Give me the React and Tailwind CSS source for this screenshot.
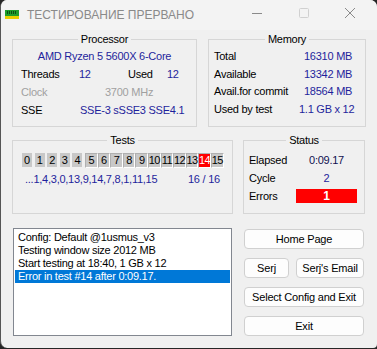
import React from 'react';

const blue = 'text-[#1f1f9c]';

function GroupBox({ title, className, children }) {
  return (
    <div className={`relative border border-[#d6d6d6] ${className}`}>
      <div className="absolute -top-[8px] left-0 right-0 flex justify-center">
        <span className="bg-[#f0f0f0] px-[3px] leading-[14px]">{title}</span>
      </div>
      {children}
    </div>
  );
}

const tests = ['0', '1', '2', '3', '4', '5', '6', '7', '8', '9', '10', '11', '12', '13', '14', '15'];

function TestCell({ n }) {
  const i = Number(n);
  if (i < 5) {
    return (
      <div className="w-[10px] h-[14px] mr-[2.6px] bg-[#c8c8c8] flex items-center justify-center leading-none">
        {n}
      </div>
    );
  }
  const red = i === 14;
  return (
    <div
      className={`w-[12.6px] h-[15px] flex items-center justify-center leading-none tracking-[-0.6px] border border-t-[#b0b0b0] border-l-[#b0b0b0] border-b-white border-r-white ${
        red ? 'bg-[#ff0000] text-white' : 'bg-[#c8c8c8]'
      }`}
    >
      {n}
    </div>
  );
}

function Btn({ children, className }) {
  return (
    <button className={`h-[20px] rounded-[4px] border border-[#d0d0d0] bg-[#fdfdfd] text-black leading-none tracking-[-0.2px] ${className}`}>
      {children}
    </button>
  );
}

export default function App() {
  return (
    <div className="w-[377px] h-[349px] bg-[#262626] font-['Liberation_Sans',Arial,sans-serif] text-[11px] tracking-[-0.25px] text-black overflow-hidden">
      <div className="w-[377px] h-[348px] rounded-t-[7px] rounded-bl-[7px] rounded-br-[4px] bg-[#f0f0f0] border-l border-[#555] flex flex-col overflow-hidden">
        {/* title bar */}
        <div className="h-[30px] bg-[#f3f3f3] flex items-center shrink-0 tracking-normal">
          <svg width="14" height="9" viewBox="0 0 14 9" className="ml-[4px] mt-[-1px]">
            <rect x="0" y="0" width="14" height="6" fill="#1e9e2a" />
            <rect x="2" y="1" width="1" height="3" fill="#0b4d12" />
            <rect x="4" y="1" width="1" height="3" fill="#0b4d12" />
            <rect x="6" y="1" width="1" height="3" fill="#0b4d12" />
            <rect x="8" y="1" width="1" height="3" fill="#0b4d12" />
            <rect x="10" y="1" width="1" height="3" fill="#0b4d12" />
            <rect x="0" y="6" width="14" height="3" fill="#e8d000" />
          </svg>
          <span className="ml-[8px] text-[12px] text-[#8a8a8a]">ТЕСТИРОВАНИЕ ПРЕРВАНО</span>
          <div className="ml-auto flex items-center">
            <svg width="46" height="30" viewBox="0 0 46 30">
              <line x1="17" y1="13.5" x2="27" y2="13.5" stroke="#8a8a8a" strokeWidth="1" />
            </svg>
            <svg width="46" height="30" viewBox="0 0 46 30">
              <rect x="18.5" y="8.5" width="9" height="9" rx="1" fill="none" stroke="#d0d0d0" strokeWidth="1" />
            </svg>
            <svg width="46" height="30" viewBox="0 0 46 30" className="mr-[4px]">
              <path d="M18 8 L28 18 M28 8 L18 18" stroke="#8a8a8a" strokeWidth="1" />
            </svg>
          </div>
        </div>

        {/* row 1 */}
        <div className="flex mt-[9px] ml-[11px] h-[88px] shrink-0 leading-[14px]">
          <GroupBox title="Processor" className="w-[185px] h-[88px]">
            <div className={`text-center mt-[9px] ${blue}`}>AMD Ryzen 5 5600X 6-Core</div>
            <div className="flex mt-[4px] ml-[8px]">
              <span className="w-[58px]">Threads</span>
              <span className={`w-[49px] ${blue}`}>12</span>
              <span className="w-[39px]">Used</span>
              <span className={blue}>12</span>
            </div>
            <div className="flex mt-[4px] ml-[8px] text-[#a0a0a0]">
              <span className="w-[84px]">Clock</span>
              <span>3700 MHz</span>
            </div>
            <div className="flex mt-[4px] ml-[8px]">
              <span className="w-[59px]">SSE</span>
              <span className={blue}>SSE-3 sSSE3 SSE4.1</span>
            </div>
          </GroupBox>
          <GroupBox title="Memory" className="w-[158px] h-[88px] ml-[11px]">
            <div className="mt-[9px] ml-[5px] flex flex-col gap-[3.5px]">
              <div className="flex"><span className="w-[90px]">Total</span><span className={blue}>16310 MB</span></div>
              <div className="flex"><span className="w-[90px]">Available</span><span className={blue}>13342 MB</span></div>
              <div className="flex"><span className="w-[90px]">Avail.for commit</span><span className={blue}>18564 MB</span></div>
              <div className="flex"><span className="w-[85px]">Used by test</span><span className={blue}>1.1 GB x 12</span></div>
            </div>
          </GroupBox>
        </div>

        {/* row 2 */}
        <div className="flex mt-[13px] ml-[11px] h-[74px] shrink-0 leading-[14px]">
          <GroupBox title="Tests" className="w-[221px] h-[74px]">
            <div className="flex mt-[12px] ml-[9px] items-start">
              {tests.map(t => (
                <TestCell key={t} n={t} />
              ))}
            </div>
            <div className={`flex mt-[4px] ml-[12px] ${blue}`}>
              <span className="w-[163px]">...1,4,3,0,13,9,14,7,8,1,11,15</span>
              <span>16 / 16</span>
            </div>
          </GroupBox>
          <GroupBox title="Status" className="w-[122px] h-[74px] ml-[10px]">
            <div className="mt-[12px] ml-[5px] flex flex-col gap-[4px]">
              <div className="flex h-[14px] items-center"><span className="w-[47px]">Elapsed</span><span className="w-[61px] text-center text-[#101050]">0:09.17</span></div>
              <div className="flex h-[14px] items-center"><span className="w-[47px]">Cycle</span><span className={`w-[61px] text-center ${blue}`}>2</span></div>
              <div className="flex h-[14px] items-center">
                <span className="w-[47px]">Errors</span>
                <span className="w-[61px] h-[14px] bg-[#ff0000] text-white font-bold text-[12px] flex items-center justify-center">1</span>
              </div>
            </div>
          </GroupBox>
        </div>

        {/* row 3 */}
        <div className="flex mt-[14px] ml-[12px] shrink-0">
          <div className="w-[219px] h-[108px] bg-white border border-[#828790] pt-[2px] px-[1px] leading-[13px]">
            <div className="pl-[3px]">Config: Default @1usmus_v3</div>
            <div className="pl-[3px]">Testing window size 2012 MB</div>
            <div className="pl-[3px]">Start testing at 18:40, 1 GB x 12</div>
            <div className="pl-[3px] bg-[#0078d7] text-white">Error in test #14 after 0:09.17.</div>
          </div>
          <div className="ml-[12px] w-[120px] flex flex-col gap-[9px] pt-[1px]">
            <Btn className="w-full">Home Page</Btn>
            <div className="flex gap-[7px]">
              <Btn className="w-[45px]">Serj</Btn>
              <Btn className="flex-1">Serj's Email</Btn>
            </div>
            <Btn className="w-full">Select Config and Exit</Btn>
            <Btn className="w-full">Exit</Btn>
          </div>
        </div>
      </div>
    </div>
  );
}
